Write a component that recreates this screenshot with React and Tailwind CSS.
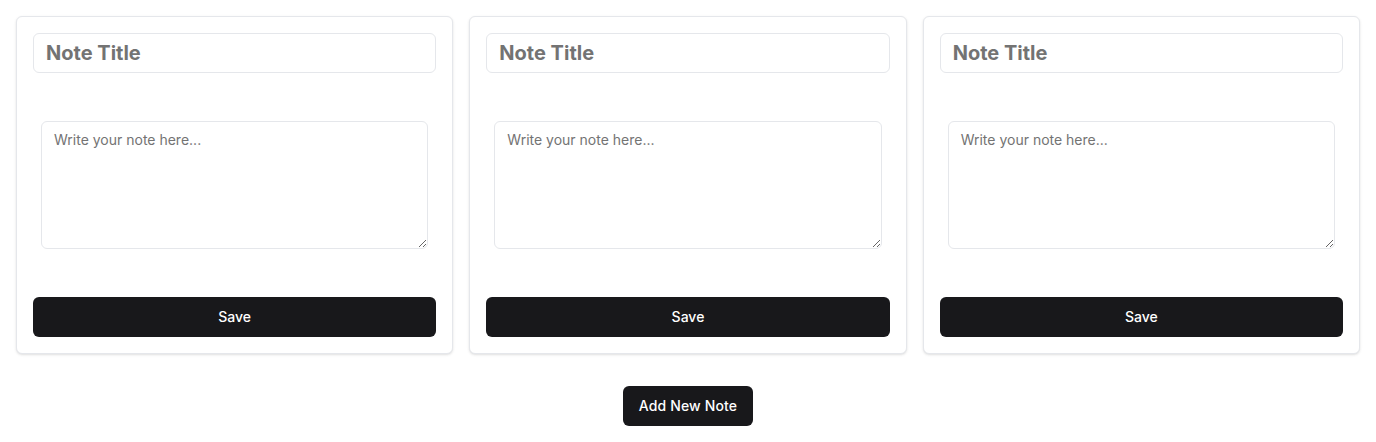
import React from "react";

function NoteCard() {
  return (
    <div className="flex flex-col rounded-md border border-gray-200 bg-white p-4 shadow-sm">
      <input
        type="text"
        placeholder="Note Title"
        className="h-10 w-full rounded-md border border-gray-200 px-3 text-xl font-bold text-neutral-900 placeholder:text-neutral-500 outline-none"
      />
      <div className="px-2 py-12">
        <textarea
          placeholder="Write your note here..."
          className="block h-32 w-full rounded-md border border-gray-200 px-3 py-2 text-sm text-neutral-900 placeholder:text-neutral-500 outline-none"
        />
      </div>
      <button className="h-10 w-full rounded-md bg-[#18181b] text-sm font-medium text-white">
        Save
      </button>
    </div>
  );
}

export default function App() {
  return (
    <div className="min-h-[442px] bg-white p-4" style={{ fontFamily: "Inter, 'Noto Sans', sans-serif" }}>
      <div className="grid grid-cols-3 gap-4">
        <NoteCard />
        <NoteCard />
        <NoteCard />
      </div>
      <div className="mt-8 flex justify-center">
        <button className="h-10 rounded-md bg-[#18181b] px-4 text-sm font-medium tracking-[0.01em] text-white">
          Add New Note
        </button>
      </div>
    </div>
  );
}
